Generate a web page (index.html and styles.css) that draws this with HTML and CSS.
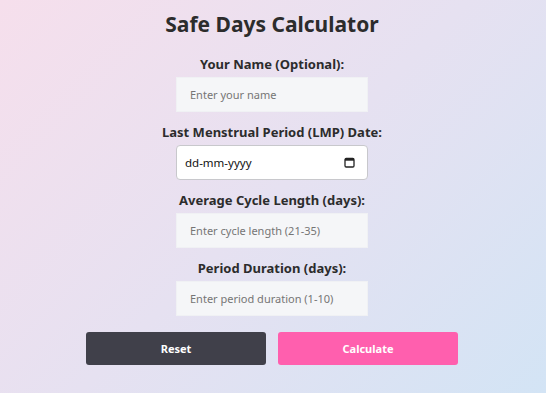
FILE: index.html
```html
<!DOCTYPE html>
<html lang="en">
<head>
<meta charset="utf-8">
<title>Safe Days Calculator</title>
<link rel="stylesheet" href="styles.css">
</head>
<body>
<main class="calc">
  <h1 class="title">Safe Days Calculator</h1>
  <form class="form">
    <div class="field">
      <label class="label" for="name">Your Name (Optional):</label>
      <input class="input" id="name" type="text" placeholder="Enter your name">
    </div>
    <div class="field">
      <label class="label" for="lmp">Last Menstrual Period (LMP) Date:</label>
      <div class="date-wrap">
        <input class="input input-date" id="lmp" type="text" placeholder="dd-mm-yyyy">
        <svg class="cal-icon" width="11" height="11" viewBox="0 0 11 11" aria-hidden="true">
          <rect x="1" y="1.5" width="9" height="8.5" rx="1.2" fill="none" stroke="#222" stroke-width="1.3"/>
          <rect x="1" y="1.5" width="9" height="2.2" fill="#222"/>
        </svg>
      </div>
    </div>
    <div class="field">
      <label class="label" for="cycle">Average Cycle Length (days):</label>
      <input class="input" id="cycle" type="number" placeholder="Enter cycle length (21-35)">
    </div>
    <div class="field">
      <label class="label" for="dur">Period Duration (days):</label>
      <input class="input" id="dur" type="number" placeholder="Enter period duration (1-10)">
    </div>
    <div class="actions">
      <button class="btn btn-reset" type="reset">Reset</button>
      <button class="btn btn-calc" type="button">Calculate</button>
    </div>
  </form>
</main>
</body>
</html>
```
FILE: styles.css
```css
html, body {
  margin: 0;
  height: 100%;
}
body {
  background: linear-gradient(135deg, #f6dfec 0%, #e6e1f1 50%, #d3e4f5 100%);
  font-family: "Noto Sans", "Open Sans", sans-serif;
  color: #2d2d2d;
}
.calc {
  display: flex;
  flex-direction: column;
  align-items: center;
  padding-top: 11px;
  padding-right: 2px;
}
.title {
  margin: 0;
  font-size: 21px;
  line-height: 26px;
  font-weight: 700;
  color: #2c2c2c;
}
.form {
  display: flex;
  flex-direction: column;
  align-items: center;
  gap: 12px;
  margin-top: 19px;
}
.field {
  display: flex;
  flex-direction: column;
  align-items: center;
  gap: 4px;
}
.label {
  font-size: 13px;
  line-height: 17px;
  font-weight: 700;
  color: #2c2c2c;
}
.input {
  box-sizing: border-box;
  width: 192px;
  height: 35px;
  padding: 0 13px;
  border: 1px solid #f0f1f4;
  background: #f5f6f8;
  font-family: "Noto Sans", sans-serif;
  font-size: 11px;
  color: #333;
  outline: none;
}
.input::placeholder {
  color: #757575;
}
.date-wrap {
  position: relative;
  width: 192px;
  height: 35px;
}
.input-date {
  background: #fff;
  border: 1px solid #c8c8cc;
  border-radius: 4px;
  padding: 0 8px;
  font-family: "Noto Sans", sans-serif;
  font-size: 11.5px;
  color: #111;
}
.input-date::placeholder {
  color: #111;
}
.cal-icon {
  position: absolute;
  right: 13px;
  top: 12px;
}
.actions {
  display: flex;
  gap: 12px;
  margin-top: 4px;
}
.btn {
  width: 180px;
  height: 33px;
  border: none;
  border-radius: 3px;
  color: #fff;
  font-family: "Noto Sans", sans-serif;
  font-size: 11px;
  font-weight: 700;
}
.btn-reset {
  background: #40404a;
}
.btn-calc {
  background: #ff5fae;
}
```
